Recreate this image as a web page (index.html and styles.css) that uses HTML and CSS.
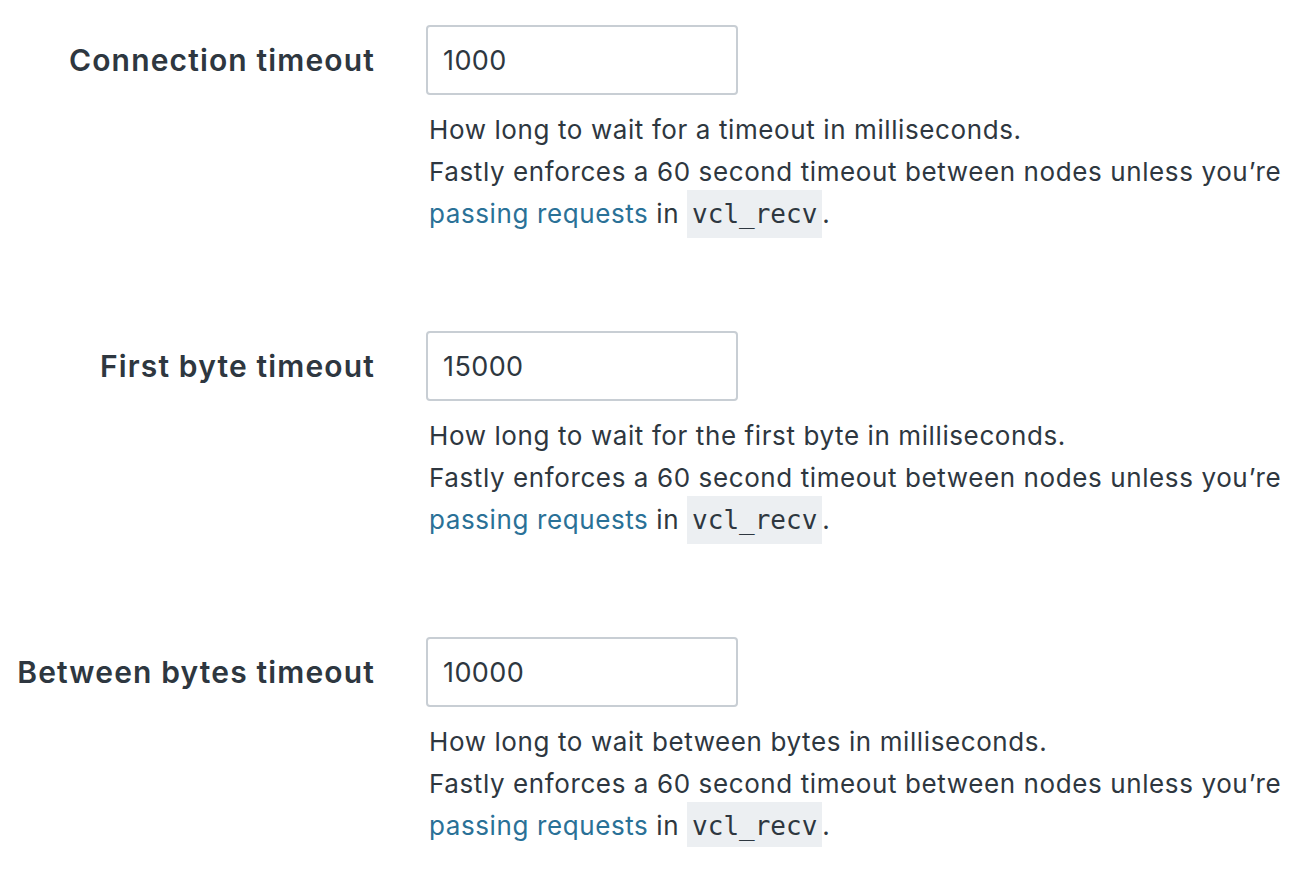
FILE: index.html
```html
<!DOCTYPE html>
<html>
<head>
<meta charset="utf-8">
<link rel="stylesheet" href="styles.css">
</head>
<body>
<div class="form">
  <div class="field">
    <label class="label">Connection timeout</label>
    <div class="control">
      <input class="input" type="text" value="1000">
      <p class="help">How long to wait for a timeout in milliseconds.<br>Fastly enforces a 60 second timeout between nodes unless you’re<br><a href="#">passing requests</a> in <code>vcl_recv</code>.</p>
    </div>
  </div>
  <div class="field">
    <label class="label">First byte timeout</label>
    <div class="control">
      <input class="input" type="text" value="15000">
      <p class="help">How long to wait for the first byte in milliseconds.<br>Fastly enforces a 60 second timeout between nodes unless you’re<br><a href="#">passing requests</a> in <code>vcl_recv</code>.</p>
    </div>
  </div>
  <div class="field">
    <label class="label">Between bytes timeout</label>
    <div class="control">
      <input class="input" type="text" value="10000">
      <p class="help">How long to wait between bytes in milliseconds.<br>Fastly enforces a 60 second timeout between nodes unless you’re<br><a href="#">passing requests</a> in <code>vcl_recv</code>.</p>
    </div>
  </div>
</div>
</body>
</html>
```

FILE: styles.css
```css
html, body {
  margin: 0;
  padding: 0;
  background: #ffffff;
}
body {
  font-family: Inter, "Noto Sans", sans-serif;
  color: #2e3740;
}
.form {
  display: flex;
  flex-direction: column;
  gap: 96px;
  padding-top: 25px;
}
.field {
  display: flex;
  align-items: flex-start;
  height: 210px;
}
.label {
  width: 376px;
  flex: none;
  text-align: right;
  font-size: 30px;
  font-weight: 600;
  line-height: 70px;
  height: 70px;
  box-sizing: border-box;
  padding-right: 1px;
  letter-spacing: 1.15px;
  white-space: nowrap;
}
.control {
  margin-left: 50px;
  display: flex;
  flex-direction: column;
}
.input {
  width: 312px;
  height: 70px;
  box-sizing: border-box;
  border: 2px solid #c8ced4;
  border-radius: 4px;
  padding: 0 15px;
  font-family: Inter, "Noto Sans", sans-serif;
  font-size: 27px;
  letter-spacing: 0.4px;
  color: #2e3740;
  outline: none;
  margin: 0;
}
.help {
  margin: 14px 0 0 3px;
  font-size: 26px;
  line-height: 42px;
  letter-spacing: 0.6px;
  white-space: nowrap;
}
.help a {
  color: #2a7197;
  text-decoration: none;
}
.help code {
  font-family: "DejaVu Sans Mono", monospace;
  font-size: 26px;
  line-height: 1;
  letter-spacing: 0;
  background: #eceff2;
  padding: 9px 5px 9px;
}
```
